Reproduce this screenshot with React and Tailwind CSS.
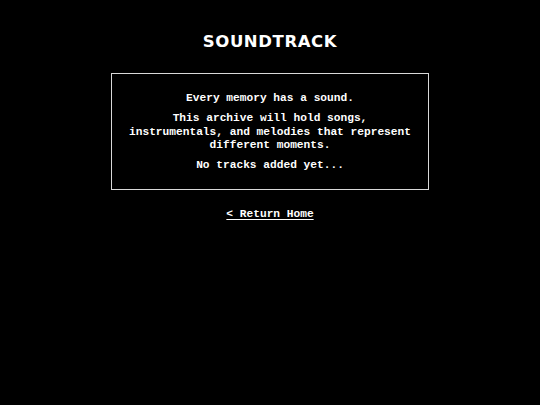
export default function App() {
  return (
    <div className="min-h-[405px] bg-black text-white flex flex-col items-center pt-[30px] font-['Liberation_Mono',monospace]">
      {/* Page heading */}
      <h1 className="font-['DejaVu_Sans',sans-serif] font-bold text-[16.5px] leading-[24px] tracking-[0.6px] uppercase">
        Soundtrack
      </h1>

      {/* Archive note */}
      <div className="mt-[19px] w-[318px] border border-[#d9d9d9] px-3 pt-[18px] pb-[16px] text-center text-[11.2px] leading-[13.5px] font-bold">
        <p>Every memory has a sound.</p>
        <p className="mt-[6.5px]">
          This archive will hold songs, instrumentals, and melodies that represent different moments.
        </p>
        <p className="mt-[6.5px]">No tracks added yet...</p>
      </div>

      <a href="#" className="mt-[17px] text-[11.2px] leading-[14px] font-bold underline underline-offset-2">
        &lt; Return Home
      </a>
    </div>
  );
}
